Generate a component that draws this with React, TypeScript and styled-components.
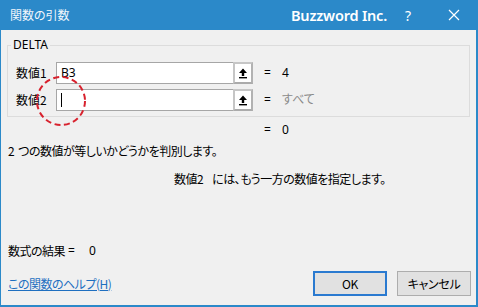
import React from "react";
import styled, { createGlobalStyle } from "styled-components";

const Global = createGlobalStyle`
  html, body { margin: 0; padding: 0; background: #f0f0f0; }
  body {
    font-family: "Noto Sans CJK JP", "Noto Sans", sans-serif;
    font-size: 12px;
    color: #000;
    font-feature-settings: "palt";
  }
`;

const Window = styled.div`
  position: relative;
  width: 478px;
  height: 307px;
  box-sizing: border-box;
  border-left: 1px solid #2b89c9;
  border-right: 2px solid #2b89c9;
  border-bottom: 2px solid #2b89c9;
  background: #f0f0f0;
  display: flex;
  flex-direction: column;
`;

const TitleBar = styled.div`
  height: 30px;
  flex: none;
  background: #2b89c9;
  margin-left: -1px;
  margin-right: -2px;
  display: flex;
  align-items: center;
  padding-left: 10px;
  color: #fff;
`;

const Title = styled.div`
  font-size: 12px;
  line-height: 16px;
  color: #f2f7fc;
  flex: 1;
`;

const Brand = styled.div`
  font-family: "Noto Sans", sans-serif;
  font-weight: 600;
  font-size: 14.5px;
  line-height: 20px;
  letter-spacing: -0.2px;
`;

const TitleButton = styled.div<{ $w: number }>`
  width: ${(p) => p.$w}px;
  display: flex;
  justify-content: center;
  align-items: center;
  font-family: "Noto Sans", sans-serif;
  font-size: 14px;
`;

const Body = styled.div`
  flex: 1;
  display: flex;
  flex-direction: column;
  padding: 0 5px 0 6px;
`;

const Group = styled.fieldset`
  margin: 8px 0 0 0;
  border: 1px solid #dcdcdc;
  padding: 0 0 5px 3px;
  width: 463px;
  box-sizing: border-box;
  display: flex;
  flex-direction: column;
  gap: 5px;
`;

const Legend = styled.legend`
  padding: 0 2px;
  font-family: "Noto Sans", sans-serif;
  font-size: 12px;
  line-height: 14px;
`;

const ArgRow = styled.div<{ $first?: boolean }>`
  display: flex;
  align-items: center;
  height: 22px;
  padding-left: 5px;
  margin-top: ${(p) => (p.$first ? 10 : 0)}px;
`;

const ArgLabel = styled.div`
  width: 40px;
  line-height: 16px;
`;

const Input = styled.div`
  width: 177px;
  height: 22px;
  box-sizing: border-box;
  border: 1px solid #a6a6a6;
  border-right: none;
  background: #fff;
  padding-left: 4px;
  display: flex;
  align-items: center;
  font-family: "Noto Sans", sans-serif;
  line-height: 16px;
`;

const Caret = styled.span`
  display: block;
  width: 1px;
  height: 14px;
  background: #000;
`;

const RefButton = styled.div`
  width: 20px;
  height: 22px;
  box-sizing: border-box;
  border: 2px solid #c6c6c6;
  border-bottom-color: #ababab;
  border-right-color: #b2b2b2;
  background: #fff;
  display: flex;
  align-items: center;
  justify-content: center;
`;

const ValueCell = styled.div`
  display: flex;
  align-items: center;
  margin-left: 11px;
  line-height: 16px;
`;

const Eq = styled.span`
  width: 18px;
  font-family: "Noto Sans", sans-serif;
`;

const Val = styled.span<{ $muted?: boolean }>`
  color: ${(p) => (p.$muted ? "#8a8a8a" : "#000")};
  font-family: "Noto Sans", "Noto Sans CJK JP", sans-serif;
`;

const TotalRow = styled.div`
  margin-top: 5px;
  padding-left: 257px;
  display: flex;
  line-height: 16px;
`;

const Desc = styled.div<{ $top: number; $indent?: number; $gap: number }>`
  margin-top: ${(p) => p.$top}px;
  padding-left: ${(p) => p.$indent ?? 1}px;
  line-height: 16px;
  letter-spacing: -0.5px;
  display: flex;
  gap: ${(p) => p.$gap}px;
`;

const ResultRow = styled.div`
  margin-top: 56px;
  padding-left: 1px;
  line-height: 16px;
  letter-spacing: -0.5px;
  display: flex;
`;

const ResultEq = styled.span`
  font-family: "Noto Sans", sans-serif;
  margin-left: 3px;
  width: 21px;
`;

const Footer = styled.div`
  margin-top: 12px;
  display: flex;
  align-items: center;
  padding-left: 1px;
`;

const HelpLink = styled.a`
  color: #1e6fc0;
  text-decoration: underline;
  line-height: 16px;
  letter-spacing: -0.5px;
  flex: 1;
  cursor: pointer;
`;

const DlgButton = styled.button<{ $default?: boolean }>`
  width: 74px;
  height: 25px;
  margin-left: 10px;
  box-sizing: border-box;
  background: #e1e1e1;
  border: ${(p) => (p.$default ? "2px solid #2a7ad0" : "1px solid #adadad")};
  font-family: "Noto Sans CJK JP", "Noto Sans", sans-serif;
  font-feature-settings: "palt";
  font-size: 12px;
  letter-spacing: -0.3px;
  color: #000;
  padding: 0;
`;

const Marker = styled.svg`
  position: absolute;
  left: 34px;
  top: 75px;
`;

const UpArrow = () => (
  <svg width="10" height="11" viewBox="0 0 10 11">
    <path d="M5 0.5 L9 5 L6.2 5 L6.2 8 L3.8 8 L3.8 5 L1 5 Z" fill="#000" />
    <rect x="1" y="9" width="8" height="1.4" fill="#000" />
  </svg>
);

const CloseIcon = () => (
  <svg width="12" height="12" viewBox="0 0 12 12">
    <path d="M1 1 L11 11 M11 1 L1 11" stroke="#fff" strokeWidth="1.2" />
  </svg>
);

export default function App() {
  return (
    <>
      <Global />
      <Window>
        <TitleBar>
          <Title>関数の引数</Title>
          <Brand>Buzzword Inc.</Brand>
          <TitleButton $w={42}>?</TitleButton>
          <TitleButton $w={49}>
            <CloseIcon />
          </TitleButton>
        </TitleBar>
        <Body>
          <Group>
            <Legend>DELTA</Legend>
            <ArgRow $first>
              <ArgLabel>数値1</ArgLabel>
              <Input>B3</Input>
              <RefButton>
                <UpArrow />
              </RefButton>
              <ValueCell>
                <Eq>=</Eq>
                <Val>4</Val>
              </ValueCell>
            </ArgRow>
            <ArgRow>
              <ArgLabel>数値2</ArgLabel>
              <Input>
                <Caret />
              </Input>
              <RefButton>
                <UpArrow />
              </RefButton>
              <ValueCell>
                <Eq>=</Eq>
                <Val $muted>すべて</Val>
              </ValueCell>
            </ArgRow>
          </Group>
          <TotalRow>
            <Eq>=</Eq>
            <Val>0</Val>
          </TotalRow>
          <Desc $top={5} $gap={4}>
            <span>2</span>
            <span>つの数値が等しいかどうかを判別します。</span>
          </Desc>
          <Desc $top={12} $indent={167} $gap={9}>
            <span>数値2</span>
            <span>には、もう一方の数値を指定します。</span>
          </Desc>
          <ResultRow>
            <span>数式の結果</span>
            <ResultEq>=</ResultEq>
            <Val>0</Val>
          </ResultRow>
          <Footer>
            <HelpLink>この関数のヘルプ(H)</HelpLink>
            <DlgButton $default>OK</DlgButton>
            <DlgButton>キャンセル</DlgButton>
          </Footer>
        </Body>
        <Marker width="54" height="54" viewBox="0 0 54 54">
          <circle
            cx="26"
            cy="26"
            r="24"
            fill="none"
            stroke="#d8222e"
            strokeWidth="2"
            strokeDasharray="6 3.5"
          />
        </Marker>
      </Window>
    </>
  );
}
